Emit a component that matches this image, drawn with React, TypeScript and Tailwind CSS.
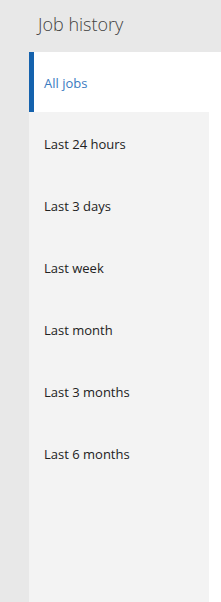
import React from 'react';

const RANGES = ['Last 24 hours', 'Last 3 days', 'Last week', 'Last month', 'Last 3 months', 'Last 6 months'];

export default function App() {
    return (
        <div className="w-[221px] h-[602px] flex flex-col bg-[#e8e8e8] overflow-hidden" style={{ fontFamily: '"Open Sans", "Noto Sans", sans-serif' }}>
            <div className="h-[52px] shrink-0 flex items-center pl-[38px] pb-[4px]">
                <h1 className="text-[18px] font-light text-[#3f3f3f]">Job history</h1>
            </div>
            <div className="flex flex-1 min-h-0">
                <div className="w-[29px] shrink-0" />
                <div className="flex-1 flex flex-col bg-white">
                    <div className="h-[60px] shrink-0 flex items-center border-l-[5px] border-[#1562ad] pl-[10px] pt-[3px] text-[13px] text-[#3b7bbf]">All jobs</div>
                    <ul className="w-[180px] flex-1 bg-[#f3f3f3]">
                        {RANGES.map(r => (
                            <li key={r} className="h-[62px] flex items-center pl-[15px] pt-[3px] text-[13px] text-[#222222]">{r}</li>
                        ))}
                    </ul>
                </div>
            </div>
        </div>
    );
}
